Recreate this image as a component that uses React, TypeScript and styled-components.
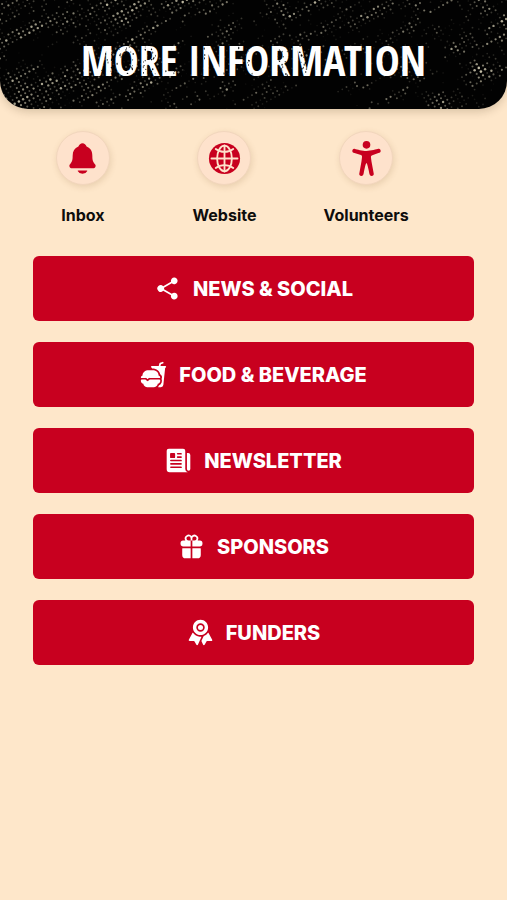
import React from "react";
import styled, { createGlobalStyle } from "styled-components";
import {
  IoNotifications,
  IoAccessibility,
  IoShareSocial,
  IoFastFood,
  IoNewspaper,
  IoGift,
  IoRibbon,
} from "react-icons/io5";

const GlobalStyle = createGlobalStyle`
  *, *::before, *::after { box-sizing: border-box; }
  body {
    margin: 0;
    background: #fee7ca;
    color: #0e0d0c;
    font-family: Inter, "Liberation Sans", sans-serif;
  }
`;

const Page = styled.div`
  min-height: 100vh;
`;

const HeaderShadow = styled.div`
  border-radius: 0 0 28px 28px;
  box-shadow: 0 3px 8px rgba(70, 50, 20, 0.2);
`;

const Header = styled.header`
  position: relative;
  overflow: hidden;
  display: flex;
  justify-content: center;
  padding: 32px 16px 21px;
  background: #020202;
  border-radius: 0 0 28px 28px;
`;

const Texture = styled.svg`
  position: absolute;
  inset: 0;
  width: 100%;
  height: 100%;
`;

const Title = styled.h1`
  position: relative;
  margin: 0;
  color: #fff;
  font-family: "Open Sans Condensed", "Roboto Condensed", "Open Sans", sans-serif;
  font-size: 42px;
  font-weight: 800;
  line-height: 56px;
  white-space: nowrap;
`;

const Shortcuts = styled.nav`
  display: grid;
  grid-template-columns: repeat(3, 1fr);
  padding: 22px 70px 0 12px;
`;

const Shortcut = styled.a`
  display: flex;
  flex-direction: column;
  align-items: center;
  gap: 20px;
  color: inherit;
  font-size: 16px;
  font-weight: 700;
  line-height: 20px;
  text-decoration: none;
`;

const Disc = styled.span`
  display: flex;
  align-items: center;
  justify-content: center;
  width: 54px;
  height: 54px;
  border: 1px solid #f2d6bd;
  border-radius: 50%;
  background: #fee2cc;
  box-shadow: 1px 2px 6px rgba(120, 80, 30, 0.16);
  color: #c8001f;
  font-size: 35px;
`;

const Menu = styled.main`
  display: flex;
  flex-direction: column;
  gap: 21px;
  padding: 31px 33px;
`;

const MenuButton = styled.button`
  display: flex;
  align-items: center;
  justify-content: center;
  gap: 12px;
  height: 65px;
  border: 0;
  border-radius: 6px;
  background: #c8001f;
  color: #fff;
  font-family: inherit;
  font-size: 20px;
  font-weight: 800;
  line-height: 24px;
  cursor: pointer;

  svg { font-size: 27px; }
`;

function Globe() {
  return (
    <svg viewBox="0 0 36 36" width="1em" height="1em" aria-hidden="true">
      <circle cx="18" cy="18" r="16" fill="currentColor" />
      <g fill="none" stroke="#fee2cc" strokeWidth="1.9" strokeLinecap="round">
        <path d="M4.6 18h26.8M18 4.6v26.8" />
        <ellipse cx="18" cy="18" rx="7.6" ry="13.2" />
        <path d="M9 8.2c5 4 13 4 18 0M9 27.8c5-4 13-4 18 0" />
      </g>
    </svg>
  );
}

const shortcuts: { label: string; icon: React.ElementType }[] = [
  { label: "Inbox", icon: IoNotifications },
  { label: "Website", icon: Globe },
  { label: "Volunteers", icon: IoAccessibility },
];

const sections: { label: string; icon: React.ElementType }[] = [
  { label: "NEWS & SOCIAL", icon: IoShareSocial },
  { label: "FOOD & BEVERAGE", icon: IoFastFood },
  { label: "NEWSLETTER", icon: IoNewspaper },
  { label: "SPONSORS", icon: IoGift },
  { label: "FUNDERS", icon: IoRibbon },
];

function hash(x: number, y: number) {
  const n = Math.sin(x * 127.1 + y * 311.7) * 43758.5453;
  return n - Math.floor(n);
}

function cloud(x: number, y: number) {
  const ix = Math.floor(x);
  const iy = Math.floor(y);
  const fx = x - ix;
  const fy = y - iy;
  const top = hash(ix, iy) * (1 - fx) + hash(ix + 1, iy) * fx;
  const low = hash(ix, iy + 1) * (1 - fx) + hash(ix + 1, iy + 1) * fx;
  return top * (1 - fy) + low * fy;
}

const dots: { x: number; y: number; light: number }[] = [];
for (let a = -30; a < 130; a += 1) {
  for (let b = -30; b < 110; b += 1) {
    const x = a * 4.2 + b * 2.1;
    const y = 10 - a * 2.3 + b * 3.7;
    if (x < -2 || x > 509 || y < -2 || y > 111) continue;
    const streak = cloud((x - y) / 34, (y + x * 0.55) / 8);
    const patch = cloud(x / 60 + 9, y / 36 + 4);
    const side = x < 230 ? 0.3 - x * 0.0007 : Math.max(0.08, (x - 340) * 0.0014);
    const light = streak * 0.8 + patch * 0.2 + hash(a, b) * 0.45 + side - 0.84;
    if (light > 0.03) dots.push({ x, y, light: Math.min(light * 1.3, 0.95) });
  }
}

function Halftone() {
  return (
    <Texture viewBox="0 0 507 109" preserveAspectRatio="xMidYMid slice" aria-hidden="true">
      {dots.map((d, i) => (
        <circle key={i} cx={d.x} cy={d.y} r={0.8 + d.light * 0.6} fill="#ece5c8" opacity={d.light} />
      ))}
    </Texture>
  );
}

const chips = Array.from({ length: 520 }, (_, i) => ({
  x: hash(i, 3) * 340,
  y: 12 + hash(i, 7) * 32,
  rx: 0.3 + hash(i, 11) * 0.5,
  ry: 0.4 + hash(i, 13) * 0.8,
})).filter((c) => cloud(c.x / 11, c.y / 60) > 0.62);

function Scuffs() {
  return (
    <Texture viewBox="0 0 340 56" preserveAspectRatio="none" aria-hidden="true">
      {chips.map((c, i) => (
        <ellipse key={i} cx={c.x} cy={c.y} rx={c.rx} ry={c.ry} fill="#111" />
      ))}
    </Texture>
  );
}

export default function App() {
  return (
    <Page>
      <GlobalStyle />
      <HeaderShadow>
        <Header>
          <Halftone />
          <Title>
            MORE INFORMATION
            <Scuffs />
          </Title>
        </Header>
      </HeaderShadow>
      <Shortcuts aria-label="Shortcuts">
        {shortcuts.map(({ label, icon: Icon }) => (
          <Shortcut key={label} href="#">
            <Disc>
              <Icon aria-hidden="true" />
            </Disc>
            {label}
          </Shortcut>
        ))}
      </Shortcuts>
      <Menu>
        {sections.map(({ label, icon: Icon }) => (
          <MenuButton key={label} type="button">
            <Icon aria-hidden="true" />
            {label}
          </MenuButton>
        ))}
      </Menu>
    </Page>
  );
}
